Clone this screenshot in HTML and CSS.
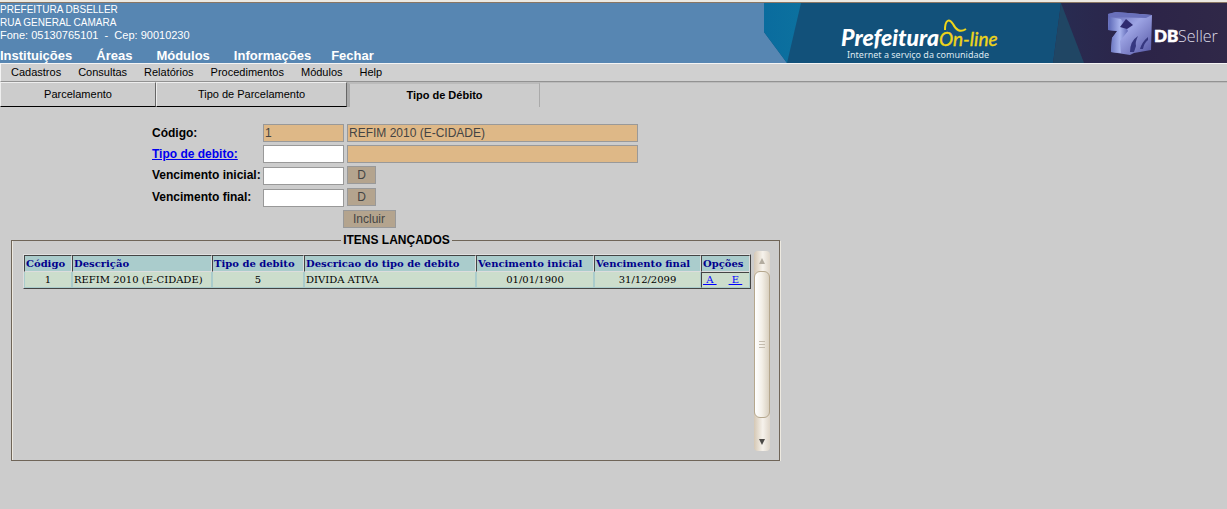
FILE: index.html
```html
<!DOCTYPE html>
<html lang="pt-BR">
<head>
<meta charset="utf-8">
<title>Tipo de Débito</title>
<link rel="stylesheet" href="styles.css">
</head>
<body>
<header class="top">
  <div class="top-info">
    <address class="address">PREFEITURA DBSELLER<br>RUA GENERAL CAMARA<br><span class="phone">Fone: 05130765101 &nbsp;-&nbsp; Cep: 90010230</span></address>
    <nav class="main-nav">
      <a href="#">Instituições</a><a href="#">Áreas</a><a href="#">Módulos</a><a href="#">Informações</a><a href="#">Fechar</a>
    </nav>
  </div>
  <svg class="banner" width="463" height="60" viewBox="0 0 463 60" role="img" aria-label="Prefeitura On-line, DBSeller">
    <defs>
      <linearGradient id="sky" x1="0" x2="1"><stop offset="0" stop-color="#0a6c9e"/><stop offset="1" stop-color="#0c719f"/></linearGradient>
      <linearGradient id="night" x1="0" x2="1"><stop offset="0" stop-color="#282c52"/><stop offset=".5" stop-color="#2c2448"/><stop offset="1" stop-color="#302848"/></linearGradient>
      <linearGradient id="cube" x1="0" x2="1" y1="0" y2="1"><stop offset="0" stop-color="#5960ad"/><stop offset=".45" stop-color="#9da4e4"/><stop offset="1" stop-color="#5354a2"/></linearGradient>
      <linearGradient id="stem" x1="0" x2="1"><stop offset="0" stop-color="#5864b4"/><stop offset=".6" stop-color="#a9b4ee"/><stop offset="1" stop-color="#6068b6"/></linearGradient>
    </defs>
    <path d="M0 0H463V60H23L0 29Z" fill="#12517a"/>
    <path d="M0 0H37L23 60L0 29Z" fill="url(#sky)"/>
    <path d="M297 0H463V60H289Z" fill="url(#night)"/>
    <path d="M297 0L320 60H289Z" fill="#204664"/>
    <path d="M344 11L352 9L388 12L387 47L370 50L366 52L347 49L348 35L354 28L344 27Z" fill="url(#cube)"/>
    <path d="M344 11L352 9L388 12L382 15L346 14Z" fill="#6970bb"/>
    <path d="M346 14L357 16L364 28L356 38L357 50L347 49L348 35L353 28L344 27Z" fill="url(#stem)"/>
    <path d="M362 16L369 22L363 26L356 24Z" fill="#2f2b70"/>
    <path d="M366 49Q366 38 374 33Q371 39 372 43L370 49Z" fill="#35377f"/>
    <path d="M376 46Q378 39 384 34L384 37Q380 40 379 46Z" fill="#35377f"/>
    <text x="77" y="43" class="brand-name">Prefeitura</text>
    <text x="175" y="43" class="brand-online">On-line</text>
    <path d="M181 27C181 17 185 15 189 21C192 27 196 30 202 26" fill="none" stroke="#efd51a" stroke-width="2"/>
    <text x="83" y="55" class="brand-motto">Internet a serviço da comunidade</text>
    <text x="390" y="39" class="seller-bold">DB</text>
    <text x="414" y="39" class="seller-light">Seller</text>
  </svg>
</header>
<nav class="menu">
  <a href="#">Cadastros</a><a href="#">Consultas</a><a href="#">Relatórios</a><a href="#">Procedimentos</a><a href="#">Módulos</a><a href="#">Help</a>
</nav>
<div class="tabs">
  <button type="button" class="tab tab-first">Parcelamento</button>
  <button type="button" class="tab">Tipo de Parcelamento</button>
  <button type="button" class="tab tab-active">Tipo de Débito</button>
</div>
<main class="content">
  <form class="form">
    <label for="codigo">Código:</label>
    <div class="fields"><input id="codigo" class="field locked" value="1" readonly><input class="field locked wide" aria-label="Descrição" value="REFIM 2010 (E-CIDADE)" readonly></div>
    <label for="tipo"><a href="#" class="lookup">Tipo de debito:</a></label>
    <div class="fields"><input id="tipo" class="field"><input class="field locked wide" aria-label="Descrição do tipo" readonly></div>
    <label for="inicial">Vencimento inicial:</label>
    <div class="fields dated"><input id="inicial" class="field"><button type="button" class="button">D</button></div>
    <label for="final">Vencimento final:</label>
    <div class="fields dated"><input id="final" class="field"><button type="button" class="button">D</button></div>
    <button type="button" class="button submit">Incluir</button>
  </form>
  <fieldset class="items">
    <legend>ITENS LANÇADOS</legend>
    <div class="items-body">
      <table class="grid">
        <colgroup><col class="c-code"><col class="c-desc"><col class="c-type"><col class="c-typedesc"><col class="c-start"><col class="c-end"><col class="c-opts"></colgroup>
        <thead><tr><th>Código</th><th>Descrição</th><th>Tipo de debito</th><th>Descricao do tipo de debito</th><th>Vencimento inicial</th><th>Vencimento final</th><th>Opções</th></tr></thead>
        <tbody><tr><td class="center">1</td><td>REFIM 2010 (E-CIDADE)</td><td class="center">5</td><td>DIVIDA ATIVA</td><td class="center">01/01/1900</td><td class="center">31/12/2099</td><td class="options"><a href="#">&nbsp;A&nbsp;</a><a href="#">&nbsp;E&nbsp;</a></td></tr></tbody>
      </table>
      <div class="scrollbar">
        <button type="button" class="arrow" aria-label="Subir"><svg width="6" height="6" viewBox="0 0 6 6"><path d="M3 0L6 6H0Z" fill="#b3aca0"/></svg></button>
        <div class="thumb"><i></i><i></i><i></i></div>
        <button type="button" class="arrow arrow-down" aria-label="Descer"><svg width="6" height="6" viewBox="0 0 6 6"><path d="M0 0H6L3 6Z" fill="#4c4a47"/></svg></button>
      </div>
    </div>
  </fieldset>
</main>
</body>
</html>
```
FILE: styles.css
```css
* { box-sizing: border-box; }
body {
  margin: 0;
  background: #ccc;
  color: #000;
  font-family: "Liberation Sans", Arial, sans-serif;
  font-size: 12px;
}
a { color: inherit; text-decoration: none; }
button, input { font: inherit; margin: 0; }

.top {
  display: flex;
  justify-content: space-between;
  background: #5786b2;
  border-top: 2px solid #ece9e2;
  box-shadow: inset 0 1px #8a7663;
  padding-top: 1px;
  color: #fff;
}
.top-info { white-space: nowrap; }
.address { font-style: normal; font-size: 10px; line-height: 13px; }
.phone { font-size: 11px; }
.main-nav {
  display: flex;
  gap: 24px;
  padding-top: 6px;
  font-size: 13px;
  font-weight: bold;
  line-height: 15px;
}
.main-nav a:last-child { margin-left: -4px; }
.banner { display: block; flex: none; }
.brand-name { font: italic 900 23px Lato, sans-serif; fill: #fff; }
.brand-online { font: italic 19px Lato, sans-serif; fill: #efd51a; stroke: #efd51a; stroke-width: .4px; }
.brand-motto { font: 9px "Noto Sans", sans-serif; fill: #dce8f0; }
.seller-bold { font: 900 17px Lato, sans-serif; fill: #fff; stroke: #fff; stroke-width: .6px; }
.seller-light { font: 300 16px "Open Sans", sans-serif; fill: #dedce8; }

.menu {
  display: flex;
  gap: 17px;
  padding: 0 10px;
  border-top: 1px solid #f4f4f4;
  border-left: 1px solid #f4f4f4;
  border-bottom: 1px solid #929292;
  background: #d0d0d0;
  font-size: 11px;
  line-height: 17px;
}

.tabs { display: flex; height: 25px; box-shadow: inset 0 1px #bbb; }
.tab {
  width: 191px;
  padding: 0 0 2px;
  border: 1px solid #eee;
  border-right-color: #666;
  border-bottom-color: #000;
  background: #ccc;
  font-size: 11px;
}
.tab-first { width: 156px; }
.tab-active {
  width: 193px;
  padding: 0 0 1px;
  border: 0 solid #aaa;
  border-width: 2px 1px 0 3px;
  border-top-color: #bbb;
  font-weight: bold;
}

.content { max-width: 780px; padding-left: 11px; }
.form {
  display: grid;
  grid-template-columns: 108px 375px;
  grid-template-rows: 18px 18px 19px 19px 18px;
  gap: 3px;
  justify-content: center;
  padding: 17px 1px 0 0;
  font-weight: bold;
}
.form label { line-height: 18px; white-space: nowrap; }
.lookup { color: #00e; text-decoration: underline; }
.fields { display: flex; gap: 3px; }
.field {
  width: 81px;
  height: 18px;
  padding: 0 1px;
  border: 1px solid #999;
  background: #fff;
  color: #444;
  font-weight: normal;
}
.dated .field { align-self: flex-end; }
.locked { background: #deb887; }
.wide { flex: 1; }
.button {
  width: 29px;
  height: 18px;
  padding: 0;
  border: 1px solid #999;
  background: #b4a48e;
  color: #444;
  font-weight: normal;
}
.submit { grid-column: 1 / -1; justify-self: center; width: 53px; margin-right: 52px; }

.items {
  margin: 5px 0 0;
  padding: 4px 9px 9px 11px;
  border: 1px solid #6f6558;
  box-shadow: 1px 1px #ede9e0, inset 1px 0 #ede9e0;
  min-width: 0;
}
.items legend {
  margin: 0 auto;
  padding: 0 2px;
  background: #ccc;
  font-weight: bold;
  line-height: 14px;
}
.items-body { display: flex; align-items: flex-start; gap: 3px; }
.grid {
  flex: 1;
  table-layout: fixed;
  margin-top: 3px;
  border: 1px solid #444;
  border-top-color: #e0e0e0;
  border-left-color: #ddd;
  border-spacing: 0;
  background: #acc;
  font-family: "DejaVu Serif", serif;
  font-size: 10px;
  line-height: 15px;
  white-space: nowrap;
}
.c-code { width: 48px; }
.c-desc { width: 140px; }
.c-type { width: 92px; }
.c-typedesc { width: 172px; }
.c-start { width: 118px; }
.c-end { width: 107px; }
.c-opts { width: 49px; }
.grid th {
  padding: 0 1px;
  border: 1px solid #444;
  border-right-color: #ddd;
  border-bottom-color: #ddd;
  color: #00008b;
  text-align: left;
}
.grid td {
  padding: 0 1px;
  border: 1px solid #acc;
  border-width: 0 1px 1px;
  background: #cdc;
}
.grid td.center { text-align: center; }
.grid td.options { border-left-color: #444; box-shadow: inset 0 1px #444; color: #00f; }
.options a { text-decoration: underline; }
.options a + a { margin-left: 12px; }

.scrollbar {
  display: flex;
  flex-direction: column;
  width: 16px;
  height: 200px;
  border-radius: 4px;
  background: linear-gradient(90deg, #d5c8b5, #f6f2ec 55%, #ded5c8);
}
.arrow {
  display: grid;
  place-items: center;
  height: 20px;
  padding: 0;
  border: 0;
  background: none;
}
.arrow-down { height: 18px; margin-top: auto; }
.thumb {
  display: flex;
  flex-direction: column;
  justify-content: center;
  align-items: center;
  gap: 2px;
  height: 147px;
  border: 1px solid #b5a78d;
  border-radius: 6px;
  background: linear-gradient(90deg, #fff, #f3efe7 50%, #d9d0c0);
}
.thumb i { width: 6px; height: 1px; background: #c4bcae; }
```
